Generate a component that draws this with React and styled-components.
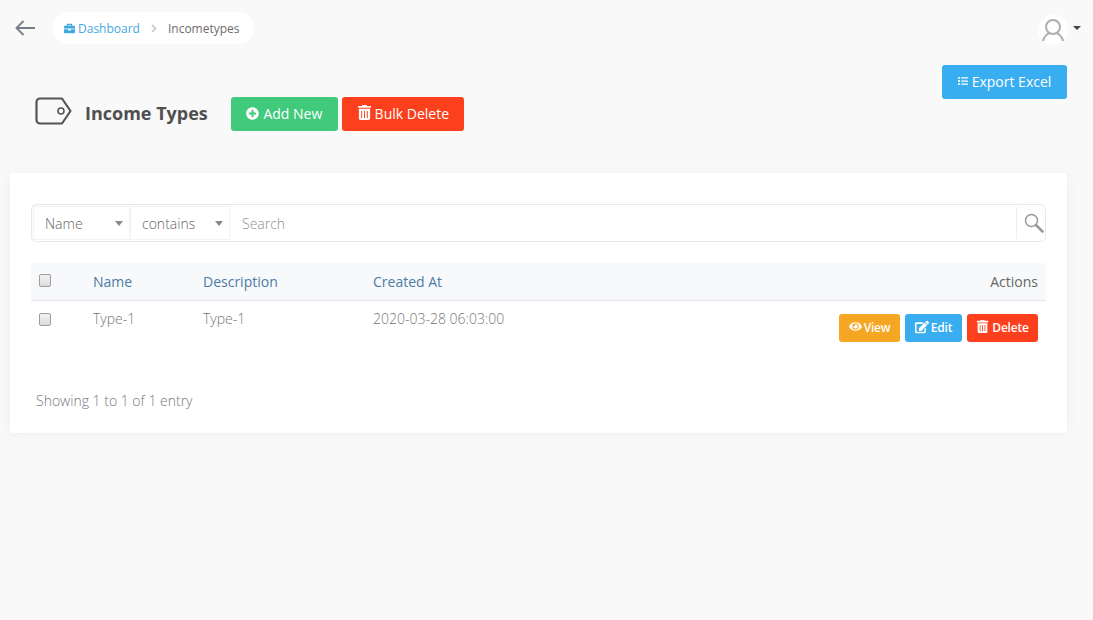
import React from "react";
import styled, { createGlobalStyle } from "styled-components";
import { FaPlusCircle, FaTrashAlt, FaEye, FaEdit, FaBriefcase, FaList } from "react-icons/fa";

const Global = createGlobalStyle`
  html, body { margin: 0; padding: 0; background: #f9f9f9; }
  body { font-family: "Open Sans", "Liberation Sans", sans-serif; font-size: 14px; color: #888; }
  * { box-sizing: border-box; }
`;

const Page = styled.div`
  width: 1093px;
  height: 620px;
  overflow: hidden;
  padding: 12px 26px 0 10px;
`;
const TopBar = styled.header`
  display: flex;
  align-items: center;
  height: 32px;
`;
const BackButton = styled.span`
  display: flex;
  width: 20px;
  margin: 0 18px 0 5px;
  color: #777d88;
`;
const Crumbs = styled.nav`
  display: flex;
  align-items: center;
  height: 32px;
  width: 201px;
  padding: 0 14px 0 11px;
  border-radius: 16px;
  background: #fff;
  font-size: 12px;
`;
const CrumbLink = styled.span`
  display: flex;
  align-items: center;
  gap: 3px;
  color: #3fa9e0;
  svg { font-size: 11px; }
`;
const CrumbSep = styled.span`
  margin: 0 11px;
  display: flex;
  color: #c4c4c4;
`;
const CrumbCurrent = styled.span`
  color: #6d6d6d;
`;
const UserBox = styled.div`
  display: flex;
  align-items: center;
  gap: 5px;
  margin-left: auto;
  margin-right: -14px;
`;
const Avatar = styled.span`
  display: flex;
  align-items: center;
  justify-content: center;
  width: 30px;
  height: 30px;
  border-radius: 50%;
  background: #fff;
  margin-top: 4px;
`;
const Caret = styled.span`
  width: 0;
  height: 0;
  border-left: 4px solid transparent;
  border-right: 4px solid transparent;
  border-top: 4px solid #444;
`;
const HeadRow = styled.section`
  display: flex;
  justify-content: space-between;
  align-items: flex-start;
  padding-top: 21px;
  height: 129px;
`;
const TitleGroup = styled.div`
  display: flex;
  align-items: center;
  margin: 32px 0 0 25px;
`;
const TagIcon = styled.span`
  display: flex;
  width: 37px;
  margin: -6px 13px 0 0;
`;
const Title = styled.h1`
  margin: -3px 23px 0 0;
  font-size: 18px;
  font-weight: 700;
  color: #4f4f4f;
  white-space: nowrap;
`;
const Btn = styled.button`
  display: inline-flex;
  align-items: center;
  justify-content: center;
  gap: ${p => p.$gap || 4}px;
  width: ${p => p.$w}px;
  height: 34px;
  margin-right: ${p => p.$mr || 0}px;
  border: 0;
  border-radius: 3px;
  padding: 0 0 2px;
  background: ${p => p.$bg};
  color: #fff;
  font-family: inherit;
  font-size: 14px;
  font-weight: 400;
  white-space: nowrap;
  svg { font-size: ${p => p.$icon || 13}px; margin-top: ${p => p.$lift ? -p.$lift : 0}px; }
`;
const Card = styled.main`
  width: 1057px;
  height: 260px;
  padding: 31px 21px 0;
  background: #fff;
  border-radius: 3px;
  box-shadow: 0 1px 12px rgba(0, 0, 0, 0.05);
`;
const FilterBar = styled.div`
  display: flex;
  height: 38px;
  border: 1px solid #e9e9e9;
  border-radius: 5px;
  padding: 1px;
`;
const Select = styled.div`
  position: relative;
  display: flex;
  align-items: center;
  width: ${p => p.$w}px;
  padding-left: ${p => p.$pl}px;
  border: 1px solid #f3f3f3;
  color: #666;
  font-size: 14px;
  font-weight: 300;
  &::after {
    content: "";
    position: absolute;
    right: 6px;
    top: 14px;
    border-left: 4.5px solid transparent;
    border-right: 4.5px solid transparent;
    border-top: 5px solid #888;
  }
`;
const SearchInput = styled.div`
  flex: 1;
  display: flex;
  align-items: center;
  padding-left: 12px;
  color: #8f8f8f;
  font-size: 14px;
  font-weight: 300;
`;
const SearchButton = styled.span`
  display: flex;
  align-items: center;
  width: 28px;
  padding-left: 7px;
  margin: 1px 0;
  border-left: 1px solid #eee;
`;
const Table = styled.div`
  margin-top: 21px;
`;
const Row = styled.div`
  display: grid;
  grid-template-columns: 54px 110px 170px 1fr auto;
  padding: 0 8px;
  height: ${p => p.$head ? "38px" : "auto"};
  align-items: ${p => p.$head ? "center" : "start"};
  background: ${p => p.$head ? "#f7f9fa" : "transparent"};
  border-bottom: ${p => p.$head ? "1px solid #e4e8ec" : "0"};
  padding-top: ${p => p.$head ? "0" : "8px"};
  color: ${p => p.$head ? "#4d7ba8" : "#777"};
  font-size: 14px;
  font-weight: ${p => p.$head ? 400 : 300};
`;
const CheckCell = styled.span`
  display: flex;
  padding-top: ${p => p.$head ? "0" : "4px"};
  margin-top: ${p => p.$head ? "-3px" : "0"};
`;
const Check = styled.span`
  width: 12px;
  height: 13px;
  border: 1px solid #9c9c9c;
  border-radius: 2px;
  background: linear-gradient(#f2f2f2, #dcdcdc);
`;
const ActionsHead = styled.span`
  color: #666;
  text-align: right;
`;
const Actions = styled.div`
  display: flex;
  gap: 5px;
  margin-top: 5px;
`;
const SmallBtn = styled(Btn)`
  height: 28px;
  font-size: 12px;
  font-weight: 600;
  letter-spacing: -0.2px;
  border-radius: 3px;
`;
const Footer = styled.p`
  margin: 49px 0 0 5px;
  font-size: 14px;
  font-weight: 300;
  color: #777;
`;

const Arrow = () => (
  <svg width="20" height="16" viewBox="0 0 20 16" fill="none" stroke="currentColor" strokeWidth="1.8">
    <path d="M20 8H1.500M8.500 1L1.500 8l7 7" />
  </svg>
);
const Chevron = () => (
  <svg width="6" height="9" viewBox="0 0 6 9" fill="none" stroke="currentColor" strokeWidth="1.500">
    <path d="M1 1l3.500 3.500L1 8" />
  </svg>
);
const User = () => (
  <svg width="24" height="24" viewBox="0 0 24 24" fill="none" stroke="#aeaeae" strokeWidth="2">
    <circle cx="12" cy="9" r="7" />
    <path d="M2 23c1-5 5-7.500 6-7.500M22 23c-1-5-5-7.500-6-7.500" />
  </svg>
);
const Tag = () => (
  <svg width="37" height="28" viewBox="0 0 37 28" fill="none" stroke="#555" strokeWidth="2.200">
    <path d="M5 1.500H27L35.500 14 27 26.500H5a3.500 3.500 0 0 1-3.500-3.500V5A3.500 3.500 0 0 1 5 1.500Z" strokeLinejoin="round" />
    <circle cx="26" cy="14" r="3" strokeWidth="1.600" />
  </svg>
);
const Magnifier = () => (
  <svg width="20" height="20" viewBox="0 0 20 20" fill="none" stroke="#999">
    <circle cx="7.500" cy="7.500" r="6" strokeWidth="1.500" />
    <path d="M12 12l6.500 6.500" strokeWidth="2.600" strokeLinecap="round" />
  </svg>
);

export default function App() {
  return (
    <Page>
      <Global />
      <TopBar>
        <BackButton><Arrow /></BackButton>
        <Crumbs>
          <CrumbLink><FaBriefcase />Dashboard</CrumbLink>
          <CrumbSep><Chevron /></CrumbSep>
          <CrumbCurrent>Incometypes</CrumbCurrent>
        </Crumbs>
        <UserBox>
          <Avatar><User /></Avatar>
          <Caret />
        </UserBox>
      </TopBar>
      <HeadRow>
        <TitleGroup>
          <TagIcon><Tag /></TagIcon>
          <Title>Income Types</Title>
          <Btn $w={107} $mr={4} $bg="#41c97c"><FaPlusCircle />Add New</Btn>
          <Btn $w={122} $gap={3} $icon={15} $lift={2} $bg="#fc3f1c"><FaTrashAlt />Bulk Delete</Btn>
        </TitleGroup>
        <Btn $w={125} $bg="#38aef0" $icon={10}><FaList />Export Excel</Btn>
      </HeadRow>
      <Card>
        <FilterBar>
          <Select $w={97} $pl={11}>Name</Select>
          <Select $w={100} $pl={11}>contains</Select>
          <SearchInput>Search</SearchInput>
          <SearchButton><Magnifier /></SearchButton>
        </FilterBar>
        <Table>
          <Row $head>
            <CheckCell $head><Check /></CheckCell>
            <span>Name</span>
            <span>Description</span>
            <span>Created At</span>
            <ActionsHead>Actions</ActionsHead>
          </Row>
          <Row>
            <CheckCell><Check /></CheckCell>
            <span>Type-1</span>
            <span>Type-1</span>
            <span>2020-03-28 06:03:00</span>
            <Actions>
              <SmallBtn $w={61} $gap={2} $icon={13} $lift={1} $bg="#f5a623"><FaEye />View</SmallBtn>
              <SmallBtn $w={57} $gap={2} $icon={14} $lift={1} $bg="#38aef0"><FaEdit />Edit</SmallBtn>
              <SmallBtn $w={71} $gap={3} $icon={13} $lift={1} $bg="#fc3f1c"><FaTrashAlt />Delete</SmallBtn>
            </Actions>
          </Row>
        </Table>
        <Footer>Showing 1 to 1 of 1 entry</Footer>
      </Card>
    </Page>
  );
}
